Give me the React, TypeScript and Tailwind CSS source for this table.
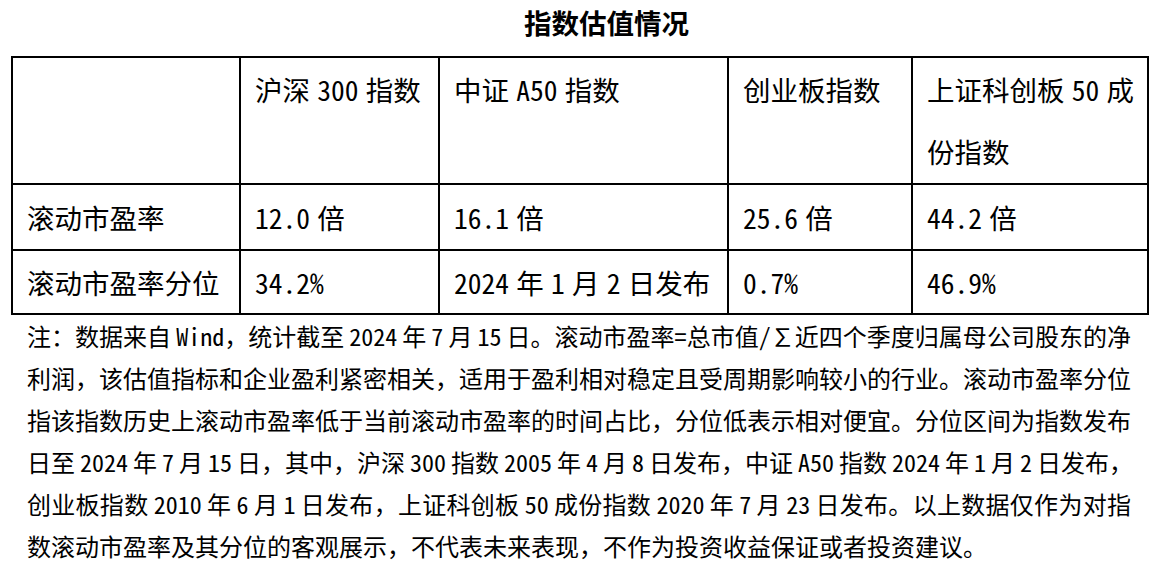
import React from "react";

const font = "font-['Noto_Sans_Mono_CJK_SC','Noto_Sans_CJK_SC',sans-serif]";

const headers = ["", "沪深 300 指数", "中证 A50 指数", "创业板指数"];
const rows = [
  ["滚动市盈率", "12.0 倍", "16.1 倍", "25.6 倍", "44.2 倍"],
  ["滚动市盈率分位", "34.2%", "2024 年 1 月 2 日发布", "0.7%", "46.9%"],
];

const notes = [
  "注：数据来自 Wind，统计截至 2024 年 7 月 15 日。滚动市盈率=总市值/∑近四个季度归属母公司股东的净",
  "利润，该估值指标和企业盈利紧密相关，适用于盈利相对稳定且受周期影响较小的行业。滚动市盈率分位",
  "指该指数历史上滚动市盈率低于当前滚动市盈率的时间占比，分位低表示相对便宜。分位区间为指数发布",
  "日至 2024 年 7 月 15 日，其中，沪深 300 指数 2005 年 4 月 8 日发布，中证 A50 指数 2024 年 1 月 2 日发布，",
  "创业板指数 2010 年 6 月 1 日发布，上证科创板 50 成份指数 2020 年 7 月 23 日发布。以上数据仅作为对指",
];

export default function App() {
  return (
    <div className={`w-[1163px] h-[563px] bg-white text-black overflow-hidden ${font}`}>
      <div className="flex justify-center pl-[50px] h-[56px] leading-[44px] text-[27.5px] font-bold">
        指数估值情况
      </div>
      <table className="ml-[11px] w-[1138px] table-fixed border-collapse text-[27.5px] [word-spacing:-6.5px]">
        <colgroup>
          <col className="w-[228px]" />
          <col className="w-[199px]" />
          <col className="w-[289px]" />
          <col className="w-[184px]" />
          <col className="w-[236px]" />
        </colgroup>
        <tbody>
          <tr className="h-[127px]">
            {headers.map((h, i) => (
              <td key={i} className="border-2 border-black align-top px-[14px] leading-[62px] whitespace-nowrap">
                {h}
              </td>
            ))}
            <td className="border-2 border-black align-top px-[14px] leading-[62px] whitespace-nowrap">
              上证科创板 50 成<br />份指数
            </td>
          </tr>
          {rows.map((r, ri) => (
            <tr key={ri} className={ri === 0 ? "h-[66px]" : "h-[64px]"}>
              {r.map((c, ci) => (
                <td key={ci} className="border-2 border-black align-middle px-[14px] leading-[40px] whitespace-nowrap">
                  {c}
                </td>
              ))}
            </tr>
          ))}
        </tbody>
      </table>
      <div className="ml-[27px] w-[1104px] text-[24px] leading-[42px] [word-spacing:-7px]">
        {notes.map((n, i) => (
          <div key={i} className="text-justify [text-align-last:justify] whitespace-nowrap">
            {n}
          </div>
        ))}
        <div>数滚动市盈率及其分位的客观展示，不代表未来表现，不作为投资收益保证或者投资建议。</div>
      </div>
    </div>
  );
}
